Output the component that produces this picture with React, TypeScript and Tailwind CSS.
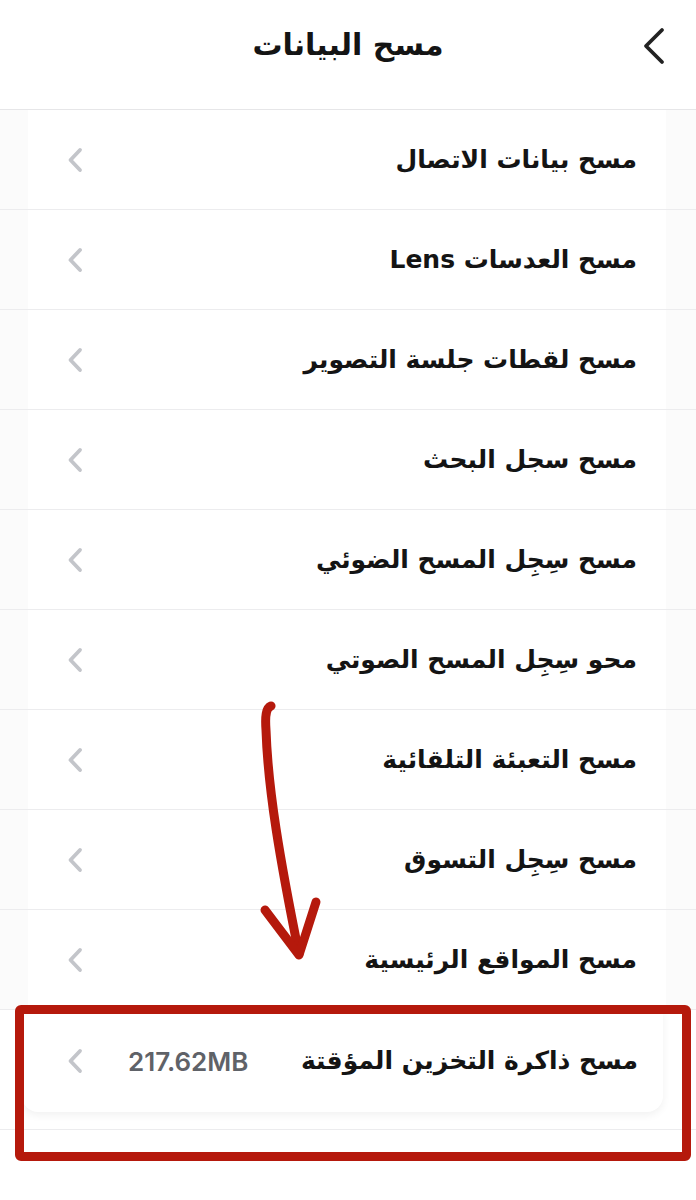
import React from 'react';

const rows = [
  'مسح بيانات الاتصال',
  'مسح العدسات Lens',
  'مسح لقطات جلسة التصوير',
  'مسح سجل البحث',
  'مسح سِجِل المسح الضوئي',
  'محو سِجِل المسح الصوتي',
  'مسح التعبئة التلقائية',
  'مسح سِجِل التسوق',
  'مسح المواقع الرئيسية',
];

function Chevron({ className = '' }: { className?: string }) {
  return (
    <svg viewBox="0 0 16 26" className={className} fill="none">
      <path d="M13 3 L3.5 13 L13 23" stroke="currentColor" strokeWidth="3.8" strokeLinecap="round" strokeLinejoin="round" />
    </svg>
  );
}

function Row({ label }: { label: string }) {
  return (
    <div className="flex h-[100px] border-b border-[#ececee]">
      <div className="w-[30px] bg-[#fbfbfb]" />
      <div className="flex flex-1 items-center bg-white pl-[39px] pr-[29px]">
        <span className="flex-1 text-[25px] font-bold text-[#141414]">{label}</span>
        <Chevron className="h-[26px] w-[16px] text-[#c3c5ca]" />
      </div>
      <div className="w-[28px] bg-[#fbfbfb]" />
    </div>
  );
}

export default function App() {
  return (
    <div
      dir="rtl"
      className="relative h-[1200px] w-[696px] overflow-hidden bg-white [font-family:'DejaVu_Sans',sans-serif]"
    >
      {/* Header */}
      <div className="grid h-[110px] grid-cols-[90px_1fr_90px] items-start border-b border-[#e6e6e8] bg-white">
        <div className="flex justify-start pr-[30px] pt-[27px]">
          <svg viewBox="0 0 24 38" className="h-[38px] w-[24px]" fill="none">
            <path d="M20 3 L4 19 L20 35" stroke="#222" strokeWidth="3.8" strokeLinecap="round" strokeLinejoin="round" />
          </svg>
        </div>
        <div className="pt-[22px] text-center text-[30px] font-bold text-[#141414]">مسح البيانات</div>
        <div />
      </div>

      {/* List */}
      {rows.map((r) => (
        <Row key={r} label={r} />
      ))}

      {/* Cache row card */}
      <div className="flex h-[120px] flex-col border-b border-[#ececee]">
        <div className="mr-[33px] ml-[22px] flex h-[102px] items-center rounded-b-[16px] bg-white pl-[45px] pr-[25px] shadow-[0_3px_8px_rgba(0,0,0,0.06)]">
          <span className="flex-1 text-[25px] font-bold text-[#141414]">مسح ذاكرة التخزين المؤقتة</span>
          <span dir="ltr" className="text-[26px] font-semibold text-[#5f6268] [font-family:Inter,sans-serif]">
            217.62MB
          </span>
          <Chevron className="mr-[45px] h-[26px] w-[16px] text-[#c3c5ca]" />
        </div>
      </div>

      {/* Highlight box */}
      <div className="pointer-events-none absolute left-[15px] top-[1005px] h-[156px] w-[676px] rounded-[6px] border-[9px] border-[#b5190c]" />

      {/* Hand-drawn arrow */}
      <svg className="pointer-events-none absolute left-0 top-0" width="696" height="1200" fill="none">
        <path
          d="M271 706 C266 708 265 716 266 730 C268 790 280 860 299 954"
          stroke="#b5190c"
          strokeWidth="9"
          strokeLinecap="round"
        />
        <path d="M265 910 L299 955 L316 902" stroke="#b5190c" strokeWidth="9" strokeLinecap="round" strokeLinejoin="round" />
      </svg>
    </div>
  );
}
